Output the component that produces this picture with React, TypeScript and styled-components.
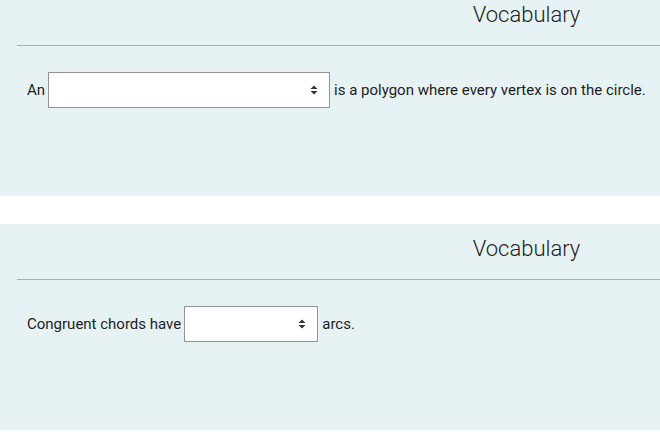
import styled, { createGlobalStyle } from "styled-components";

const GlobalStyle = createGlobalStyle`
  html, body {
    margin: 0;
    padding: 0;
    background: #ffffff;
    font-family: Roboto, "Liberation Sans", sans-serif;
    color: #1d1d1d;
  }
`;

const StQuestionList = styled.div`
  display: flex;
  flex-direction: column;
  gap: 28px;
  margin-top: -10px;
`;

const StCard = styled.section`
  display: flex;
  flex-direction: column;
  height: 206px;
  background-color: #e7f2f4;
`;

const StHeading = styled.h2`
  margin: 0;
  padding: 11px 0 0 393px;
  height: 55px;
  box-sizing: border-box;
  text-align: center;
  font-size: 22px;
  font-weight: 300;
  line-height: 28px;
  color: #222;
`;

const StDivider = styled.hr`
  margin: 0 0 0 17px;
  border: none;
  border-top: 1px solid #a7b1b4;
  height: 0;
`;

const StSentence = styled.div`
  display: flex;
  align-items: center;
  gap: 3px;
  padding: 26px 0 0 27px;
  font-size: 15px;
  color: #1d1d1d;
`;

const StSelectBox = styled.div<{ width: number }>`
  display: flex;
  align-items: center;
  justify-content: flex-end;
  box-sizing: border-box;
  width: ${({ width }) => width}px;
  height: 36px;
  padding-right: 11px;
  background: #ffffff;
  border: 1px solid #8f959a;
`;

const StAfter = styled.span`
  margin-left: 1px;
`;

const Arrows = () => (
  <svg width="8" height="10" viewBox="0 0 8 10">
    <path d="M4 0.5 L7.5 4 H0.5 Z" fill="#333" />
    <path d="M4 9.5 L7.5 6 H0.5 Z" fill="#333" />
  </svg>
);

const questions = [
  { before: "An", width: 282, after: "is a polygon where every vertex is on the circle." },
  { before: "Congruent chords have", width: 134, after: "arcs." },
];

const App = () => {
  return (
    <>
      <GlobalStyle />
      <StQuestionList>
        {questions.map((q, index) => (
          <StCard key={index}>
            <StHeading>Vocabulary</StHeading>
            <StDivider />
            <StSentence>
              <span>{q.before}</span>
              <StSelectBox width={q.width}>
                <Arrows />
              </StSelectBox>
              <StAfter>{q.after}</StAfter>
            </StSentence>
          </StCard>
        ))}
      </StQuestionList>
    </>
  );
};

export default App;
